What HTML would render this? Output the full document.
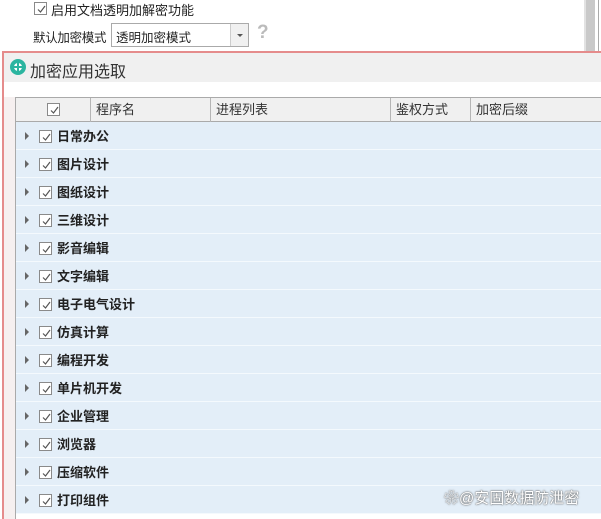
<!DOCTYPE html>
<html><head><meta charset="utf-8"><style>
*{margin:0;padding:0;box-sizing:border-box}
body{width:601px;height:519px;overflow:hidden;background:#fff;position:relative;font-family:"Liberation Sans","Noto Sans CJK SC",sans-serif;font-size:13px;color:#222}
.a{position:absolute}
.cb{position:absolute;width:13px;height:13px;border:1px solid #8a8a8a;background:#fff}
.cb svg{position:absolute;left:1px;top:1px}
.row{position:absolute;left:16px;width:585px;height:28px;background:#e3eef8;border-bottom:1px solid #f4f9fd}
.row .tri{position:absolute;left:9px;top:10px;width:0;height:0;border-left:4px solid #666;border-top:4px solid transparent;border-bottom:4px solid transparent}
.row .cb{left:23px;top:8px}
.row .t{position:absolute;left:41px;top:4px;font-weight:bold;font-size:13px;color:#222}
.h{position:absolute;top:0;height:24px;line-height:23px;border-right:1px solid #b5b5b5;padding-left:5px;color:#333}
</style></head><body>
<div class="cb" style="left:34px;top:2px"><svg width="11" height="11"><path d="M2 5.5 L4.5 8 L9 2" stroke="#555" fill="none" stroke-width="1.2"/></svg></div>
<div class="a" style="left:51px;top:0px;font-size:13px">启用文档透明加解密功能</div>
<div class="a" style="left:33px;top:27px;font-size:12.5px;letter-spacing:-0.3px">默认加密模式</div>
<div class="a" style="left:111px;top:23px;width:138px;height:24px;border:1px solid #aaa;background:#fff"><span class="a" style="left:4px;top:3px;font-size:12.5px">透明加密模式</span><div class="a" style="right:0;top:0;width:18px;height:22px;background:#f0f0f0;border-left:1px solid #ccc"><div class="a" style="left:6px;top:10px;border-top:3px solid #555;border-left:3px solid transparent;border-right:3px solid transparent"></div></div></div>
<div class="a" style="left:257px;top:22px;font-size:19px;font-weight:bold;color:#bbb">?</div>
<div class="a" style="left:584px;top:0;width:11px;height:51px;background:#c9c9c9;border-left:2px solid #e2e2e2"></div>
<div class="a" style="left:598px;top:0;width:1px;height:51px;background:#aaa"></div>
<div class="a" style="left:2px;top:51px;width:599px;height:468px;border-top:2px solid #e58c8c;border-left:2px solid #e58c8c;background:#f6f0f0"></div>
<div class="a" style="left:4px;top:53px;width:597px;height:29px;background:#f0f0f0"></div>
<div class="a" style="left:10px;top:59px;width:16px;height:16px;border-radius:50%;background:#2bb5a0"><div class="a" style="left:4px;top:4px;width:8px;height:8px;border-radius:50%;background:#fff"></div><div class="a" style="left:7px;top:4px;width:2px;height:8px;background:#2bb5a0"></div><div class="a" style="left:4px;top:7px;width:8px;height:2px;background:#2bb5a0"></div></div>
<div class="a" style="left:30px;top:58px;font-size:16px;color:#333">加密应用选取</div>
<div class="a" style="left:4px;top:82px;width:597px;height:15px;background:#fff"></div>
<div class="a" style="left:15px;top:82px;width:586px;height:437px;background:#fff"></div>
<div class="a" style="left:15px;top:97px;width:586px;height:25px;background:#f0f0f0;border:1px solid #aaa;border-right:none">
<div class="h" style="left:0;width:75px"><div class="cb" style="left:31px;top:5px"><svg width="11" height="11"><path d="M2 5.5 L4.5 8 L9 2" stroke="#555" fill="none" stroke-width="1.2"/></svg></div></div>
<div class="h" style="left:75px;width:120px">程序名</div>
<div class="h" style="left:195px;width:180px">进程列表</div>
<div class="h" style="left:375px;width:80px">鉴权方式</div>
<div class="h" style="left:455px;width:130px;border:none">加密后缀</div>
</div>
<div class="a" style="left:15px;top:122px;width:1px;height:397px;background:#aaa"></div>
<div id="rows"></div>
<script>
var n=["日常办公","图片设计","图纸设计","三维设计","影音编辑","文字编辑","电子电气设计","仿真计算","编程开发","单片机开发","企业管理","浏览器","压缩软件","打印组件"],h="";
n.forEach(function(t,i){h+='<div class="row" style="top:'+(122+i*28)+'px"><div class="tri"></div><div class="cb"><svg width="11" height="11"><path d="M2 5.5 L4.5 8 L9 2" stroke="#555" fill="none" stroke-width="1.2"/></svg></div><div class="t">'+t+'</div></div>';});
document.getElementById("rows").innerHTML=h;
</script>
<div class="a" style="left:444px;top:487px;font-size:15px;color:#fff;text-shadow:0 0 2px #666,0 0 1px #444">❀@安固数据防泄密</div>
</body></html>
